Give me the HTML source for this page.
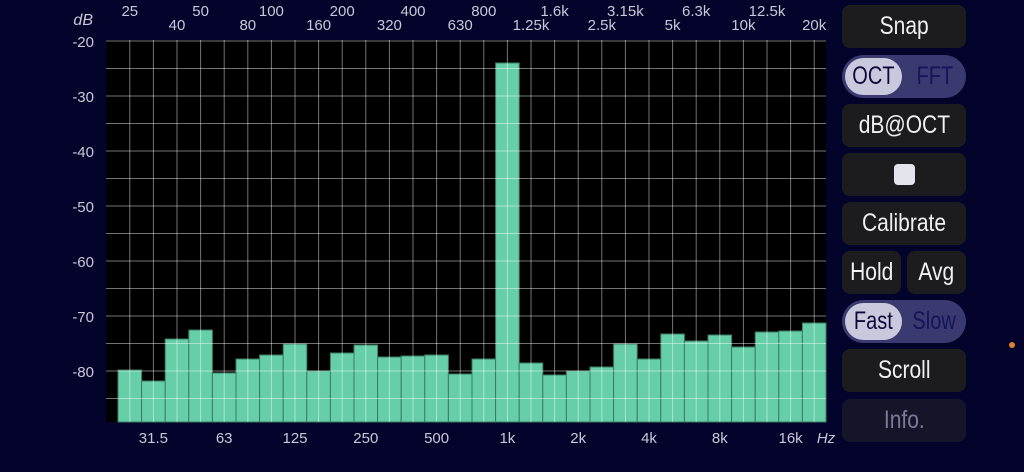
<!DOCTYPE html>
<html><head><meta charset="utf-8">
<style>
html,body{margin:0;padding:0;width:1024px;height:472px;overflow:hidden;background:#03032b;font-family:"Liberation Sans",sans-serif;}
.b{position:absolute;left:842px;width:124px;height:43px;border-radius:8px;background:#1c1c1e;color:#f0f0f0;font-size:25px;display:flex;align-items:center;justify-content:center;}
.b span{display:inline-block;transform:scaleX(0.84);}
.seg{position:absolute;left:842px;width:124px;height:43px;border-radius:22px;background:#3a3a70;}
.pill{position:absolute;left:3px;top:3px;width:57px;height:37px;border-radius:19px;background:#c9c9dd;}
.seg .t{position:absolute;top:0;height:43px;display:flex;align-items:center;justify-content:center;font-size:25px;color:#0a0a3a;}
.seg .t span{display:inline-block;transform:scaleX(0.8);}
svg text{font-family:"Liberation Sans",sans-serif;}
</style></head><body>
<svg width="840" height="472" style="position:absolute;left:0;top:0">
<rect x="106" y="40" width="720" height="382" fill="#000"/>
<g fill="#66cfa8" stroke="#3c7c64" stroke-width="1">
<rect x="118" y="370" width="23.6" height="52"/>
<rect x="141.6" y="381" width="23.6" height="41"/>
<rect x="165.2" y="339" width="23.6" height="83"/>
<rect x="188.8" y="330" width="23.6" height="92"/>
<rect x="212.4" y="373" width="23.6" height="49"/>
<rect x="236" y="359" width="23.6" height="63"/>
<rect x="259.6" y="355" width="23.6" height="67"/>
<rect x="283.2" y="344" width="23.6" height="78"/>
<rect x="306.8" y="371" width="23.6" height="51"/>
<rect x="330.4" y="353" width="23.6" height="69"/>
<rect x="354" y="345" width="23.6" height="77"/>
<rect x="377.6" y="357" width="23.6" height="65"/>
<rect x="401.2" y="356" width="23.6" height="66"/>
<rect x="424.8" y="355" width="23.6" height="67"/>
<rect x="448.4" y="374" width="23.6" height="48"/>
<rect x="472" y="359" width="23.6" height="63"/>
<rect x="495.6" y="63" width="23.6" height="359"/>
<rect x="519.2" y="363" width="23.6" height="59"/>
<rect x="542.8" y="375" width="23.6" height="47"/>
<rect x="566.4" y="371" width="23.6" height="51"/>
<rect x="590" y="367" width="23.6" height="55"/>
<rect x="613.6" y="344" width="23.6" height="78"/>
<rect x="637.2" y="359" width="23.6" height="63"/>
<rect x="660.8" y="334" width="23.6" height="88"/>
<rect x="684.4" y="341" width="23.6" height="81"/>
<rect x="708" y="335" width="23.6" height="87"/>
<rect x="731.6" y="347" width="23.6" height="75"/>
<rect x="755.2" y="332" width="23.6" height="90"/>
<rect x="778.8" y="331" width="23.6" height="91"/>
<rect x="802.4" y="323" width="23.6" height="99"/>
</g>
<g stroke="#ffffff" stroke-opacity="0.45" stroke-width="1">
<path d="M106 41H826M106 68.5H826M106 96H826M106 123.5H826M106 151H826M106 178.5H826M106 206H826M106 233.5H826M106 261H826M106 288.5H826M106 316H826M106 343.5H826M106 371H826M106 398.5H826"/>
<path d="M129.8 40V422M153.4 40V422M177 40V422M200.6 40V422M224.2 40V422M247.8 40V422M271.4 40V422M295 40V422M318.6 40V422M342.2 40V422M365.8 40V422M389.4 40V422M413 40V422M436.6 40V422M460.2 40V422M483.8 40V422M507.4 40V422M531 40V422M554.6 40V422M578.2 40V422M601.8 40V422M625.4 40V422M649 40V422M672.6 40V422M696.2 40V422M719.8 40V422M743.4 40V422M767 40V422M790.6 40V422M814.2 40V422"/>
</g>
<svg x="0" y="0" width="100" height="422"><text x="94" y="432" fill="#c8c8d8" font-size="15" text-anchor="end">-90</text></svg>
<g fill="#c8c8d8" font-size="15" text-anchor="end">
<text x="94" y="47">-20</text><text x="94" y="102">-30</text><text x="94" y="157">-40</text><text x="94" y="212">-50</text><text x="94" y="267">-60</text><text x="94" y="322">-70</text><text x="94" y="377">-80</text>
<text x="93" y="25" font-style="italic" font-size="16">dB</text>
</g>
<g fill="#c8c8d8" font-size="15" text-anchor="middle">
<text x="129.8" y="16">25</text><text x="200.6" y="16">50</text><text x="271.4" y="16">100</text><text x="342.2" y="16">200</text><text x="413" y="16">400</text><text x="483.8" y="16">800</text><text x="554.6" y="16">1.6k</text><text x="625.4" y="16">3.15k</text><text x="696.2" y="16">6.3k</text><text x="767" y="16">12.5k</text>
<text x="177" y="30">40</text><text x="247.8" y="30">80</text><text x="318.6" y="30">160</text><text x="389.4" y="30">320</text><text x="460.2" y="30">630</text><text x="531" y="30">1.25k</text><text x="601.8" y="30">2.5k</text><text x="672.6" y="30">5k</text><text x="743.4" y="30">10k</text><text x="814.2" y="30">20k</text>
<text x="153.4" y="443">31.5</text><text x="224.2" y="443">63</text><text x="295" y="443">125</text><text x="365.8" y="443">250</text><text x="436.6" y="443">500</text><text x="507.4" y="443">1k</text><text x="578.2" y="443">2k</text><text x="649" y="443">4k</text><text x="719.8" y="443">8k</text><text x="790.6" y="443">16k</text>
<text x="826" y="443" font-style="italic">Hz</text>
</g>
</svg>
<div class="b" style="top:5px"><span>Snap</span></div>
<div class="seg" style="top:55px"><div class="pill"></div><div class="t" style="left:3px;width:57px"><span>OCT</span></div><div class="t" style="left:64px;width:57px;color:#14145a"><span>FFT</span></div></div>
<div class="b" style="top:104px"><span>dB@OCT</span></div>
<div class="b" style="top:153px"><div style="width:21px;height:21px;border-radius:4px;background:#e4e4ec"></div></div>
<div class="b" style="top:202px"><span>Calibrate</span></div>
<div class="b" style="top:251px;width:59px"><span>Hold</span></div>
<div class="b" style="top:251px;left:907px;width:59px"><span>Avg</span></div>
<div class="seg" style="top:300px"><div class="pill"></div><div class="t" style="left:3px;width:57px"><span>Fast</span></div><div class="t" style="left:64px;width:57px;color:#14145a"><span>Slow</span></div></div>
<div class="b" style="top:349px"><span>Scroll</span></div>
<div class="b" style="top:399px;background:#15152a;color:#7a7a9a"><span>Info.</span></div>
<div style="position:absolute;left:1009px;top:342px;width:6px;height:6px;border-radius:3px;background:#e0802a"></div>
</body></html>
